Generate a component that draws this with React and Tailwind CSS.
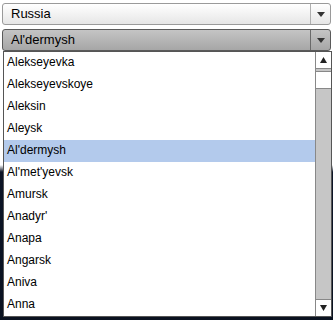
import React from 'react'

const cities = [
  'Alekseyevka',
  'Alekseyevskoye',
  'Aleksin',
  'Aleysk',
  "Al'dermysh",
  "Al'met'yevsk",
  'Amursk',
  "Anadyr'",
  'Anapa',
  'Angarsk',
  'Aniva',
  'Anna'
]

const Caret = () => (
  <svg width="8" height="5" viewBox="0 0 8 5">
    <path d="M0 0 H8 L4 5 Z" fill="#333" />
  </svg>
)

function Select({ value, dark }) {
  return (
    <div
      className={
        'flex h-[22px] rounded-[3px] border ' +
        (dark
          ? 'border-[#5a5a5a] bg-[linear-gradient(#c4c4c4,#a6a6a6)]'
          : 'border-[#9a9a9a] bg-[linear-gradient(#ffffff,#e6e6e6)]')
      }
    >
      <div className="flex-1 pl-[8px] text-[13px] leading-[20px] text-black">{value}</div>
      <div
        className={
          'flex w-[20px] items-center justify-center border-l ' +
          (dark ? 'border-[#6a6a6a]' : 'border-[#b0b0b0]')
        }
      >
        <Caret />
      </div>
    </div>
  )
}

export default function App() {
  return (
    <div className="h-[320px] w-[333px] overflow-hidden bg-[linear-gradient(#ffffff_0px,#ffffff_165px,#0c1426_172px,#0a1220_320px)] pt-[3px] font-['Liberation_Sans',Arial,sans-serif]">
      <div className="bg-white px-[2px]">
        <Select value="Russia" />
        <div className="h-[4px]" />
        <Select value="Al'dermysh" dark />
      </div>
      <div className="ml-[3px] mr-[1px] flex h-[266px] border border-[#555] bg-white">
        <div className="flex-1">
          {cities.map(c => (
            <div
              key={c}
              className={
                'h-[22px] pl-[3px] text-[12px] leading-[21px] text-black ' +
                (c === "Al'dermysh" ? 'bg-[#b3caec]' : '')
              }
            >
              {c}
            </div>
          ))}
        </div>
        <div className="flex w-[16px] flex-col border-l border-[#888] bg-[#c6c6c6]">
          <div className="flex h-[17px] items-center justify-center border-b border-[#888] bg-white">
            <svg width="7" height="6" viewBox="0 0 7 6">
              <path d="M0 6 H7 L3.5 0 Z" fill="#222" />
            </svg>
          </div>
          <div className="mt-[2px] h-[18px] border-y border-[#888] bg-white" />
          <div className="flex-1" />
          <div className="flex h-[17px] items-center justify-center border-t border-[#888] bg-white">
            <svg width="7" height="6" viewBox="0 0 7 6">
              <path d="M0 0 H7 L3.5 6 Z" fill="#222" />
            </svg>
          </div>
        </div>
      </div>
    </div>
  )
}
